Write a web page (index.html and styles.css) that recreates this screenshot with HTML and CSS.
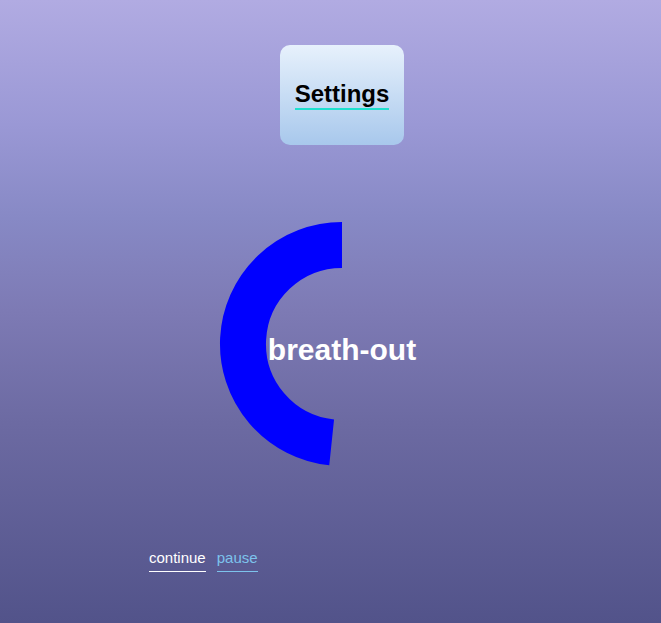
FILE: index.html
```html
<!DOCTYPE html>
<html>
<head>
<meta charset="utf-8">
<link rel="stylesheet" href="styles.css">
</head>
<body>
<div class="app">
  <div class="top">
    <button class="settings"><span class="settings-label">Settings</span></button>
  </div>
  <div class="breath">
    <svg class="ring" width="250" height="250" viewBox="0 0 250 250">
      <path d="M125 26 A99 99 0 0 0 114.65 223.46" fill="none" stroke="#0000ff" stroke-width="46"/>
    </svg>
    <div class="phase">breath-out</div>
  </div>
  <div class="controls">
    <a class="ctl ctl-continue">continue</a>
    <a class="ctl ctl-pause">pause</a>
  </div>
</div>
</body>
</html>
```

FILE: styles.css
```css
html, body {
  margin: 0;
  padding: 0;
}
body {
  width: 661px;
  height: 623px;
  overflow: hidden;
  background: linear-gradient(to bottom, #b1abe2 0%, #9a98d5 20%, #8789c5 35%, #7d7ab4 50%, #6c6aa2 68%, #52538a 100%);
  font-family: "Liberation Sans", Arial, sans-serif;
}
.app {
  display: flex;
  flex-direction: column;
  padding-top: 45px;
}
.top {
  display: flex;
  justify-content: center;
  padding-left: 23px;
}
.settings {
  width: 124px;
  height: 100px;
  border: none;
  border-radius: 10px;
  background: linear-gradient(to bottom, #e7f1fc, #a8c8ec);
  display: flex;
  align-items: center;
  justify-content: center;
  padding: 0;
  font-family: "Liberation Sans", Arial, sans-serif;
}
.settings-label {
  display: inline-block;
  font-size: 24px;
  font-weight: bold;
  color: #000;
  border-bottom: 2px solid #1ee0cf;
}
.breath {
  display: grid;
  justify-content: center;
  padding-left: 23px;
  margin-top: 74px;
}
.ring, .phase {
  grid-area: 1 / 1;
}
.ring {
  display: block;
}
.phase {
  align-self: center;
  justify-self: center;
  font-size: 30px;
  line-height: 30px;
  font-weight: bold;
  color: #fff;
  padding-top: 12px;
  white-space: nowrap;
}
.controls {
  display: flex;
  gap: 11px;
  padding-left: 149px;
  margin-top: 80px;
}
.ctl {
  font-size: 15px;
  padding-bottom: 5px;
  border-bottom: 1px solid currentColor;
  cursor: pointer;
}
.ctl-continue {
  color: #ffffff;
}
.ctl-pause {
  color: #7dc3ec;
}
```
